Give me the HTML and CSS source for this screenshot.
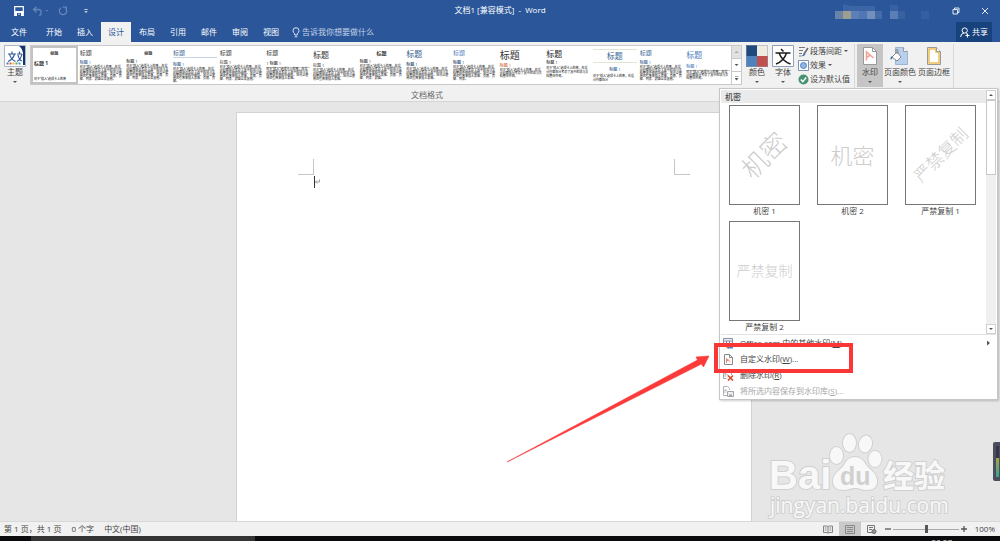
FILE: index.html
```html
<!DOCTYPE html>
<html lang="zh-CN">
<head>
<meta charset="utf-8">
<title>文档1 [兼容模式] - Word</title>
<link rel="stylesheet" href="styles.css">
</head>
<body>
<div class="app">
  <header class="top">
    <div class="titlebar">
      <div class="quick">
        <button class="plain" aria-label="保存"><svg width="10" height="10" viewBox="0 0 10 10"><path d="M.7.7h8.6v8.6H.7z" fill="none" stroke="#fff" stroke-width="1.2"/><path d="M1 5h8v4H1z" fill="#fff"/><path d="M3 7h4v3H3z" fill="#2b579a"/><path d="M4.5 7.500h1v1.500h-1z" fill="#fff"/></svg></button>
        <button class="plain" aria-label="撤消"><svg width="18" height="10" viewBox="0 0 18 10"><path d="M4.500.8L1.500 3.500l3 2.700M1.700 3.500h4.500q3 0 3 3t-2 3" fill="none" stroke="#6485ba" stroke-width="1.300"/><path d="M13.500 4h3l-1.500 1.500z" fill="#6485ba"/></svg></button>
        <button class="plain" aria-label="恢复"><svg width="10" height="10" viewBox="0 0 10 10"><path d="M3 1.800a3.700 3.700 0 1 0 4.500.4M4.700 1.200h3.600v3.300" fill="none" stroke="#6485ba" stroke-width="1.300"/></svg></button>
        <button class="plain" aria-label="自定义快速访问工具栏"><svg width="4" height="5" viewBox="0 0 4 5"><path d="M.3 0h3.400v1H.3zM.2 2h3.600L2 4.300z" fill="#b9c8e0"/></svg></button>
      </div>
      <div class="doc-title">文档1 [兼容模式]&nbsp; - &nbsp;Word</div>
      <div class="window-tools">
        <svg class="account" width="96" height="16" viewBox="0 0 96 16"><path d="M0 8h8v8H0z" fill="#6a83a8"/><path d="M8 8h8v8H8z" fill="#9d9d94"/><path d="M16 8h8v8h-8z" fill="#5c7fb5"/><path d="M24 8h8v8h-8z" fill="#5077b3"/><path d="M8 1l8 2h24v5H8z" fill="#3b65a5"/><path d="M32 8h8v8h-8z" fill="#728fbe"/><path d="M40 8h7v8h-7z" fill="#426ba8"/><path d="M55 8h8v8h-8z" fill="#5b7eb6"/><path d="M55 2h8v6h-8zM63 8h7v8h-7z" fill="#3761a2"/><path d="M86 8h8v8h-8z" fill="#365fa2"/></svg>
        <button class="plain" aria-label="还原"><svg width="8" height="8" viewBox="0 0 8 8"><path d="M1 2.500h4.500V7H1zM2.500 2V1H7v4.500H6" fill="none" stroke="#e3eaf5"/></svg></button>
        <button class="plain" aria-label="关闭"><svg width="8" height="8" viewBox="0 0 8 8"><path d="M1 1l6 6M7 1L1 7" stroke="#e3eaf5"/></svg></button>
      </div>
    </div>
    <nav class="tabs">
      <button class="tab file">文件</button>
      <button class="tab">开始</button>
      <button class="tab">插入</button>
      <button class="tab active">设计</button>
      <button class="tab">布局</button>
      <button class="tab">引用</button>
      <button class="tab">邮件</button>
      <button class="tab">审阅</button>
      <button class="tab">视图</button>
      <button class="tell"><svg width="8" height="11" viewBox="0 0 8 11"><path d="M2.700 8V6.800Q1 5.300 1 3.700a3 3 0 0 1 6 0Q7 5.300 5.300 6.800V8zM2.700 9.800h2.600" fill="none" stroke="#dbe4f2"/></svg>告诉我你想要做什么</button>
      <button class="share"><svg width="10" height="11" viewBox="0 0 10 11"><circle cx="4.700" cy="3.500" r="2.600" fill="none" stroke="#fff"/><path d="M.6 10q.2-3.600 3.400-4M6 6.500l1 .8M5.500 8.500h4M7.500 6.500v4" fill="none" stroke="#fff"/></svg>共享</button>
    </nav>
  </header>

  <section class="ribbon">
    <div class="group formatting">
      <div class="tools">
        <button class="big theme"><svg width="22" height="22" viewBox="0 0 22 22"><path d="M.5.5h21v21H.5z" fill="#fff" stroke="#a9b6ca"/><path d="M15 1h6v19h-2V8q-1-5-4-7z" fill="#14336b"/><path d="M4 9h8M8 6.500V9M10.500 9Q9 14.500 4 16.500M5.500 9q1 5 6 7.500M13 9h5M15.500 6.500V9M18 9q-1 5-5 7.500M14 10q1 5 4 6" fill="none" stroke="#2f5b9c" stroke-width="1.200"/><path d="M2.500 17.500h2v2h-2z" fill="#4c78b7"/><path d="M5.500 17.500h2v2h-2z" fill="#d75b48"/><path d="M8.500 17.500h2v2h-2z" fill="#efb13d"/><path d="M11.500 17.500h2v2h-2z" fill="#57a86f"/><path d="M14.500 17.500h2v2h-2z" fill="#4b91c3"/></svg><span>主题</span><i class="caret"></i></button>
        <div class="styles">
          <div class="style-list">
            <button class="style s1"><b>标题</b><em>标题 1</em><small>对于“插入”选项卡上的库</small></button>
            <button class="style"><b>标题</b><em class="blue">标题 1</em><small>对于“插入”选项卡上的库，在设计时都充分考虑了其中的项与文档整体外观的协调性。您可以使用这些库来插入表格、页眉、页脚、列表、封面以及其他。</small></button>
            <button class="style mid"><b class="small">标题</b><em>标题 1</em><small>对于“插入”选项卡上的库，在设计时都充分考虑了其中的项与文档整体外观的协调性。您可以使用这些库来插入表格、页眉、页脚、列表、封面以及其他。</small></button>
            <button class="style"><b class="blue lined">标题</b><em class="blue">标题 1</em><small>对于“插入”选项卡上的库，在设计时都充分考虑了其中的项与文档整体外观的协调性。您可以使用这些库来插入表格、页眉、页脚。</small></button>
            <button class="style"><b>标题</b><em class="thin">标题 1</em><small>对于“插入”选项卡上的库，在设计时都充分考虑了其中的项与文档整体外观的协调性。您可以使用这些库来插入表格、页眉、页脚、列表、封面以及其他。</small></button>
            <button class="style"><b>标题</b><em class="rule">1 标题 1</em><small>对于“插入”选项卡上的库，在设计时都充分考虑了其中的项与文档整体外观的协调性。您可以使用这些库来插入表格。</small></button>
            <button class="style"><b class="large tall">标题</b><em class="thin">标题 1</em><small>对于“插入”选项卡上的库，在设计时都充分考虑了其中的项与文档整体外观的协调性。您可以使用这些库来插入表格。</small></button>
            <button class="style mid"><b class="heavy">标题</b><em>标题 1</em><small>对于“插入”选项卡上的库，在设计时都充分考虑了其中的项与文档整体外观的协调性。您可以使用这些库来插入表格、页眉、页脚、列表、封面。</small></button>
            <button class="style"><b class="large blue">标题</b><em class="navy low">标题 1</em><small>对于“插入”选项卡上的库，在设计时都充分考虑了其中的项与文档整体外观的协调性。您可以使用这些库来插入表格。</small></button>
            <button class="style"><b class="sky">标题</b><em class="navy">标题 1</em><small>对于“插入”选项卡上的库，在设计时都充分考虑了其中的项与文档整体外观的协调性。您可以使用这些库来插入表格、页眉、页脚、列表。</small></button>
            <button class="style"><b class="huge">标题</b><em class="orange">标题 1</em><small>对于“插入”选项卡上的库，在设计时都充分考虑了其中的项与文档整体外观。</small></button>
            <button class="style"><b class="large dark">标题</b><em>标题 1</em><small class="loose">对于“插入”选项卡上的库，在设计时都充分考虑了其中的项与文档整体外观。</small></button>
            <button class="style mid"><b class="large blue framed">标题</b><em class="blue">标题 1</em><small class="loose">对于“插入”选项卡上的库，在设计时都充分</small></button>
            <button class="style"><b class="blue">标题</b><em class="blue">标题 1</em><small>对于“插入”选项卡上的库，在设计时都充分考虑了其中的项与文档整体外观的协调性。您可以使用这些库来插入表格、页眉、页脚、列表、封面以及其他。</small></button>
            <button class="style"><b class="large tall sky">标题</b><em class="sky rule">标题 1</em><small>对于“插入”选项卡上的库，在设计时都充分考虑了其中的项与文档整体外观。</small></button>
          </div>
          <div class="style-scroll">
            <button class="off" aria-label="上一行"><i class="caret up"></i></button>
            <button aria-label="下一行"><i class="caret"></i></button>
            <button aria-label="其他"><i class="caret more"></i></button>
          </div>
        </div>
        <button class="big"><svg width="22" height="22" viewBox="0 0 22 22"><path d="M0 0h11v11H0z" fill="#1f497d"/><path d="M11 0h11v11H11z" fill="#eeece1"/><path d="M0 11h11v11H0z" fill="#4f81bd"/><path d="M11 11h11v11H11z" fill="#c0504d"/><path d="M.5.5h21v21H.5z" fill="none" stroke="#8c99ad" stroke-opacity=".5"/></svg><span>颜色</span><i class="caret"></i></button>
        <button class="big"><svg width="22" height="22" viewBox="0 0 22 22"><path d="M.5.5h21v21H.5z" fill="#fff" stroke="#8fa0bd"/><path d="M9 4l2.500 2.500M3.500 8h15M14.500 8Q12 16 4 19M7 8q3 8 11.500 11" fill="none" stroke="#1b1b1b" stroke-width="1.500"/></svg><span>字体</span><i class="caret"></i></button>
        <div class="stack">
          <button><svg width="11" height="11" viewBox="0 0 11 11"><path d="M1 1.500h6M1 4.500h4M1 7.500h3M1 10h2" stroke="#777"/><path d="M10 2L6 8" stroke="#666" stroke-width="1.500"/><path d="M3 10q2 0 3-3l1.500 1Q6 11 3 10z" fill="#3d72b8"/></svg>段落间距<i class="caret"></i></button>
          <button><svg width="11" height="11" viewBox="0 0 11 11"><path d="M.5.5h10v10H.5z" fill="#fff" stroke="#7f91b5"/><circle cx="5.500" cy="5.500" r="3" fill="#8fb4e8" stroke="#5481c1"/></svg>效果<i class="caret"></i></button>
          <button><svg width="11" height="11" viewBox="0 0 11 11"><circle cx="5.500" cy="5.500" r="5" fill="#489273"/><path d="M2.800 5.500l2 2.200L8.200 3.500" fill="none" stroke="#fff" stroke-width="1.400"/></svg>设为默认值</button>
        </div>
      </div>
      <div class="group-name">文档格式</div>
    </div>
    <div class="group background">
      <button class="big on"><svg width="22" height="22" viewBox="0 0 22 22"><path d="M4.500 2.500h9l4 4v13h-13z" fill="#fff" stroke="#999"/><path d="M13.500 2.500v4h4" fill="none" stroke="#999"/><path d="M7.500 15.500V7l7 6M7.500 12.500l4-2.500" fill="none" stroke="#f2a192" stroke-width="1.500"/></svg><span>水印</span><i class="caret"></i></button>
      <button class="big"><svg width="22" height="22" viewBox="0 0 22 22"><path d="M6.500 2.500h8l4 4v13h-12z" fill="#b8d0ee" stroke="#9db4d0"/><path d="M14.500 2.500v4h4" fill="#fff" stroke="#999"/><path d="M3 12l5-5 4 5-4 4z" fill="#fff" stroke="#888"/><path d="M7 9V5q1.500-2 2 1v3" fill="none" stroke="#888"/><path d="M3 11q-2 1.500-1.500 3t2-1z" fill="#3878bd"/></svg><span>页面颜色</span><i class="caret"></i></button>
      <button class="big"><svg width="22" height="22" viewBox="0 0 22 22"><path d="M4.500 2.500h9l4 4v13h-13z" fill="#fff" stroke="#999"/><path d="M6 4h7v3h3v11H6z" fill="none" stroke="#eebc55" stroke-width="1.500"/><path d="M13.500 2.500v4h4" fill="#fff" stroke="#999"/></svg><span>页面边框</span></button>
    </div>
  </section>

  <main class="workspace">
    <article class="page">
      <div class="marks"><i class="mark left"></i><i class="mark right"></i></div>
      <div class="entry"><i class="cursor"></i><svg width="5" height="6" viewBox="0 0 5 6"><path d="M4.500.5v2.500H.5M2 1.500L.5 3 2 4.500" fill="none" stroke="#888" stroke-width=".8"/></svg></div>
    </article>
  </main>

  <footer class="status">
    <span>第 1 页，共 1 页</span><span>0 个字</span><span>中文(中国)</span>
    <div class="views">
      <button class="view" aria-label="阅读视图"><svg width="10" height="9" viewBox="0 0 10 9"><path d="M.5 1h3.500l1 .7L6 1h3.500v6.500H6l-1 .8-1-.8H.5zM5 2v6M1.800 3h1.700M1.800 5h1.700M6.500 3h1.700M6.500 5h1.700" fill="none" stroke="#777" stroke-width=".9"/></svg></button>
      <button class="view current" aria-label="页面视图"><svg width="10" height="9" viewBox="0 0 10 9"><path d="M.5.5h9v8h-9zM2 2.500h6M2 4.500h6M2 6.500h6" fill="none" stroke="#888"/></svg></button>
      <button class="view" aria-label="Web 版式视图"><svg width="10" height="9" viewBox="0 0 10 9"><path d="M5 7.500H.5v-7h7V4M2 2.500h4M2 4.500h3" fill="none" stroke="#777"/><circle cx="7" cy="6.500" r="2" fill="#999" stroke="#666"/></svg></button>
      <button class="view zoom-step" aria-label="缩小"><svg width="6" height="6" viewBox="0 0 6 6"><path d="M0 3h6" stroke="#555" stroke-width="1.300"/></svg></button>
      <input class="zoom" type="range" min="0" max="100" value="50" aria-label="缩放">
      <button class="view zoom-step" aria-label="放大"><svg width="6" height="6" viewBox="0 0 6 6"><path d="M0 3h6M3 0v6" stroke="#555" stroke-width="1.300"/></svg></button>
      <span class="percent">100%</span>
    </div>
  </footer>
  <div class="taskbar"><div class="running"></div><span class="clock">20:27</span></div>

  <svg class="brand" width="184" height="92" viewBox="0 0 184 92" role="img" aria-label="Baidu 经验">
    <g class="brand-ink">
      <text class="brand-latin" x="3" y="60">Bai</text>
      <ellipse cx="70.500" cy="26.500" rx="6.500" ry="8.500"/>
      <ellipse cx="83.500" cy="14" rx="6.500" ry="9"/>
      <ellipse cx="99.500" cy="15" rx="6.500" ry="8.500" transform="rotate(12 99.500 15)"/>
      <ellipse cx="109" cy="30" rx="6.500" ry="8"/>
      <path d="M89 28c-6 0-9 4-11 8-3 5-10 7-11 15-.5 7 4 10 10 10 5 0 8-2 12-2s7 2 12 2c6 0 11-3 10-10-1-8-7-10-11-15-2-4-5-8-11-8z"/>
      <text class="brand-cn" x="117" y="58">经验</text>
      <text class="brand-url" x="4" y="84">jingyan.baidu.com</text>
    </g>
    <text class="brand-du" x="74" y="56">du</text>
  </svg>
  <div class="meter"><i></i></div>

  <section class="popup">
    <div class="popup-main">
      <div class="popup-scroll">
        <h2>机密</h2>
        <div class="cards">
          <button class="card"><span class="sheet"><span class="wm wide tilt">机密</span></span>机密 1</button>
          <button class="card"><span class="sheet"><span class="wm wide">机密</span></span>机密 2</button>
          <button class="card"><span class="sheet"><span class="wm tilt">严禁复制</span></span>严禁复制 1</button>
          <button class="card"><span class="sheet"><span class="wm">严禁复制</span></span>严禁复制 2</button>
        </div>
      </div>
      <div class="scrollbar"><button aria-label="向上滚动"><i class="caret up"></i></button><div class="thumb"></div><button class="down" aria-label="向下滚动"><i class="caret"></i></button></div>
    </div>
    <div class="menu">
      <button><svg width="11" height="11" viewBox="0 0 11 11"><path d="M.5.5h9v8h-9zM.5 3h9M3.500 3v5M6.500 3v5" fill="#eef0f8" stroke="#8d8fa8"/><path d="M2 8l3-1 2 2-2 2z" fill="#e0653c"/><path d="M5 8h5v2.500H5z" fill="#4d87c7"/></svg><span>Office.com 中的其他水印(<u>M</u>)</span><i class="caret next"></i></button>
      <button><svg width="11" height="11" viewBox="0 0 11 11"><path d="M1.500.5h5l3 3v7h-8z" fill="#fff" stroke="#888"/><path d="M6.500.5v3h3" fill="none" stroke="#888"/><path d="M3.500 9V4.500L7.500 8M3.500 7l2-1" fill="none" stroke="#ef8674"/></svg><span>自定义水印(<u>W</u>)...</span></button>
      <button><svg width="11" height="11" viewBox="0 0 11 11"><path d="M.5 9V.5h6l2 2V5M.5 8.500h3M2 7V3l3 2.500" fill="none" stroke="#aaa"/><path d="M5 5.500l5 5M10 5.500l-5 5" stroke="#d9472b" stroke-width="1.600"/></svg><span>删除水印(<u>R</u>)</span></button>
      <button disabled><svg width="11" height="11" viewBox="0 0 11 11"><path d="M.5 9.500v-9h4l2 2V4M.5 9.500H4M2 7V3.500L4 5" fill="none" stroke="#b5aebb"/><path d="M4.500 5.500h6v5h-6z" fill="#eee" stroke="#a5a0aa"/><path d="M6 8.500h3v2H6z" fill="#a5a0aa"/></svg><span>将所选内容保存到水印库(<u>S</u>)...</span></button>
    </div>
  </section>

  <svg class="arrow" width="204" height="108" viewBox="0 0 204 108"><path d="M1 107L191.500 5 190 2 203 1 197.500 12 195.500 9z" fill="#fc3a3a" stroke="#fc3a3a" stroke-width=".6"/></svg>
  <div class="highlight"></div>
</div>
</body>
</html>
```

FILE: styles.css
```css
* { box-sizing: border-box; }

body {
  margin: 0;
  font: 8px/12px "Open Sans", "Noto Sans CJK SC", sans-serif;
  color: #444;
  background: #e6e6e6;
}

button {
  margin: 0;
  padding: 0;
  border: 0;
  background: none;
  color: inherit;
  font: inherit;
}

svg { display: block; flex: none; }

.app {
  position: relative;
  display: flex;
  flex-direction: column;
  height: 100vh;
  overflow: hidden;
}

.caret {
  flex: none;
  width: 4px;
  height: 2px;
  background: #555;
  clip-path: polygon(0 0, 100% 0, 50% 100%);
}
.caret.up { clip-path: polygon(50% 0, 100% 100%, 0 100%); }
.caret.next { width: 3px; height: 5px; clip-path: polygon(0 0, 100% 50%, 0 100%); }
.caret.more { height: 5px; clip-path: polygon(0 0, 100% 0, 100% 20%, 0 20%, 0 50%, 100% 50%, 50% 100%, 0 50%); }

/* Title bar and tabs */
.top { background: #2b579a; color: #fff; }

.titlebar {
  display: grid;
  grid-template-columns: 1fr auto 1fr;
  align-items: center;
  height: 22px;
}
.quick { display: flex; align-items: center; gap: 8px; padding-left: 14px; }
.quick button:last-child { margin-left: 6px; }
.quick button:last-child { padding-left: 2px; }
.plain { display: block; }
.doc-title { line-height: 20px; align-self: start; }
.window-tools { display: flex; justify-content: flex-end; align-items: center; gap: 21px; padding-right: 11px; }

.tabs { display: flex; height: 20px; gap: 1px; }
.tab { padding: 0 7px; }
.tab.file { padding: 0 11px; }
.tab.active { background: #f1f1f1; color: #2b579a; }
.tell { display: flex; align-items: center; gap: 2px; padding-left: 5px; color: #c3d1e6; }
.share {
  display: flex;
  align-items: center;
  justify-content: center;
  gap: 2px;
  width: 36px;
  margin-left: auto;
  margin-right: 8px;
  background: #17427c;
}

/* Ribbon */
.ribbon {
  display: flex;
  height: 60px;
  padding-right: 46px;
  background: #f1f1f1;
  border-bottom: 1px solid #d5d5d5;
}
.group { margin: 2px 0; border-right: 1px solid #d8d8d8; }
.formatting { flex: 1; display: flex; flex-direction: column; min-width: 0; }
.tools { display: flex; gap: 4px; padding: 0 4px; }
.group-name { margin-top: 2px; text-align: center; color: #666; }
.background { display: flex; padding: 0 2px; }

.big {
  flex: none;
  display: flex;
  flex-direction: column;
  align-items: center;
  min-width: 22px;
  height: 43px;
  padding-top: 1px;
}
.big span { line-height: 10px; }
.big .caret { margin-top: 4px; }
.background .big { padding-left: 1px; padding-right: 1px; }
.background .big.on { width: 26px; background: #c5c5c5; }

.styles {
  flex: 1;
  display: flex;
  min-width: 0;
  height: 40px;
  margin-top: 1px;
  border: 1px solid #c9c9c9;
  background: #fff;
}
.style-list {
  flex: 1;
  display: grid;
  grid-template-columns: repeat(15, minmax(0, 1fr));
  min-width: 0;
}
.style {
  display: flex;
  flex-direction: column;
  height: 38px;
  padding: 3px 1px 0 2px;
  text-align: left;
  color: #333;
}
.style b { height: 9px; font-size: 6px; line-height: 9px; font-weight: 400; }
.style em { margin-top: 2px; height: 6px; font-size: 4px; line-height: 5px; font-style: normal; font-weight: 500; }
.style small { font-size: 3px; line-height: 3px; font-weight: 500; color: #333; }
.style small.loose { line-height: 4px; }
.style.mid b { text-align: center; }
.style b.small { height: 8px; font-size: 4px; font-weight: 700; }
.style b.heavy { height: 8px; font-size: 5px; font-weight: 700; }
.style b.large { font-size: 8px; }
.style b.tall { height: 12px; line-height: 12px; }
.style b.huge { height: 13px; font-size: 10px; line-height: 13px; }
.style b.huge + em { margin-top: 1px; }
.style b.dark { color: #222; }
.style b.lined { border-bottom: 1px solid #c7d5e8; }
.style b.lined + em { margin-top: 4px; }
.style b.framed { height: 14px; line-height: 12px; border: solid #dfe6d3; border-width: 1px 0; }
.style b.framed + em { margin: 4px 0 1px; text-align: center; }
.style em.thin { font-weight: 400; }
.style em.low { margin-top: 4px; }
.style em.rule { margin-top: 3px; height: 7px; border-bottom: 1px solid #ccc; }
.blue { color: #365f91; }
.sky { color: #4f81bd; }
.navy { color: #243f6a; }
.orange { color: #d0703c; }

.style.s1 { padding: 3px 1px 0; border: 2px solid #c3c3c3; }
.style.s1 b { height: 5px; font-size: 4px; line-height: 5px; text-align: center; font-weight: 700; }
.style.s1 em { margin-top: 3px; height: 8px; font-size: 5px; line-height: 8px; font-weight: 700; }
.style.s1 small { height: 4px; margin-top: auto; white-space: nowrap; }

.style-scroll { display: flex; flex-direction: column; width: 10px; border-left: 1px solid #c9c9c9; }
.style-scroll button {
  flex: 1;
  display: flex;
  align-items: center;
  justify-content: center;
  border-bottom: 1px solid #c9c9c9;
}
.style-scroll button:last-child { border-bottom: 0; }
.style-scroll .off { background: #e1e1e1; }
.style-scroll .off .caret { background: #aaa; }

.stack { display: flex; flex-direction: column; width: 52px; }
.stack button { display: flex; align-items: center; gap: 1px; height: 14px; white-space: nowrap; }
.stack .caret { margin-left: 1px; }

/* Document area */
.workspace {
  flex: 1;
  display: flex;
  justify-content: center;
  min-height: 0;
  padding: 10px 12px 0 0;
  background: #e6e6e6;
}
.page {
  width: 516px;
  padding: 46px 61px 0;
  background: #fff;
  border: 1px solid #d2d2d2;
  border-bottom: 0;
}
.marks { display: flex; justify-content: space-between; }
.mark { width: 16px; height: 16px; border: 0 solid #c6c6c6; border-bottom-width: 1px; }
.mark.left { border-right-width: 1px; }
.mark.right { border-left-width: 1px; }
.entry { display: flex; align-items: center; padding: 1px 0 0 16px; }
.cursor { width: 1px; height: 12px; background: #333; }

/* Status bar */
.status {
  display: flex;
  align-items: center;
  gap: 10px;
  height: 15px;
  padding: 0 5px 0 4px;
  background: #f1f1f1;
  border-top: 1px solid #d8d8d8;
}
.views { display: flex; align-items: center; margin-left: auto; align-self: stretch; }
.view { display: flex; align-items: center; justify-content: center; width: 22px; height: 100%; }
.view.current { background: #c9c9c9; }
.view.zoom-step { width: 10px; }
.zoom { appearance: none; width: 66px; height: 8px; margin: 0; background: linear-gradient(#aaa, #aaa) center / 100% 1px no-repeat; }
.zoom::-webkit-slider-thumb { appearance: none; width: 3px; height: 8px; background: #555; }
.percent { width: 26px; text-align: right; }

.taskbar {
  display: flex;
  height: 5px;
  padding-left: 31px;
  overflow: hidden;
  background: #0b0a0c;
}
.running { width: 224px; background: #343434; }
.clock { margin-left: auto; margin-right: 48px; color: #ddd; }

/* Brand mark over the document area */
.brand { position: absolute; right: 50px; bottom: 20px; }
.brand-ink { fill: #f8f8f8; stroke: #d0d0d0; stroke-width: 2px; paint-order: stroke; }
.brand-latin { font: 700 40px "Liberation Sans", sans-serif; }
.brand-du { font: 700 25px "Liberation Sans", sans-serif; fill: #d0d0d0; }
.brand-cn { font: 700 31px "Noto Sans CJK SC", sans-serif; }
.brand-url { font: 400 21px "Open Sans", sans-serif; }

.meter {
  position: absolute;
  right: 0;
  bottom: 60px;
  width: 7px;
  height: 39px;
  padding: 4px 1px 4px 3px;
  border-radius: 2px 0 0 2px;
  background: #4a4e5e;
}
.meter i { display: block; height: 100%; background: linear-gradient(#343747 38%, #a5a54c 40%, #33a58f); }

/* Watermark drop-down */
.popup {
  position: absolute;
  top: 88px;
  right: 2px;
  width: 279px;
  padding: 1px 1px 0;
  background: #fff;
  border: 1px solid #c6c6c6;
  box-shadow: 1px 1px 2px #0003;
}
.popup-main { display: flex; border-bottom: 1px solid #e3e3e3; }
.popup-scroll { flex: 1; }
.popup h2 { margin: 0; padding-left: 4px; background: #eaeaea; font-size: 8px; line-height: 13px; font-weight: 500; }
.cards { display: grid; grid-template-columns: repeat(3, 71px); gap: 4px 17px; padding: 2px 8px 1px; }
.card { display: flex; flex-direction: column; align-items: center; line-height: 12px; }
.sheet {
  display: flex;
  align-items: center;
  justify-content: center;
  width: 100%;
  height: 100px;
  border: 1px solid #777;
}
.wm { font-size: 14px; line-height: 20px; font-weight: 300; color: #ccc; white-space: nowrap; }
.wm.tilt { font-size: 17px; transform: rotate(-45deg); }
.wm.wide { font-size: 22px; line-height: 30px; }
.wm.wide.tilt { font-size: 26px; }

.scrollbar { display: flex; flex-direction: column; width: 10px; background: #f0f0f0; }
.scrollbar button {
  display: flex;
  align-items: center;
  justify-content: center;
  height: 10px;
  border: 1px solid #d0d0d0;
  background: #fff;
}
.scrollbar .down { margin-top: auto; }
.thumb { height: 75px; border: 1px solid #c8c8c8; background: #fff; }

.menu button {
  display: flex;
  align-items: center;
  gap: 6px;
  width: 100%;
  height: 16px;
  padding: 0 6px 0 2px;
}
.menu .next { margin-left: auto; }
.menu button:disabled { color: #a6a6a6; }

/* Annotation */
.highlight {
  position: absolute;
  top: 343px;
  right: 147px;
  width: 139px;
  height: 30px;
  border: 4px solid #fb3636;
}
.arrow { position: absolute; top: 355px; right: 290px; }
```
